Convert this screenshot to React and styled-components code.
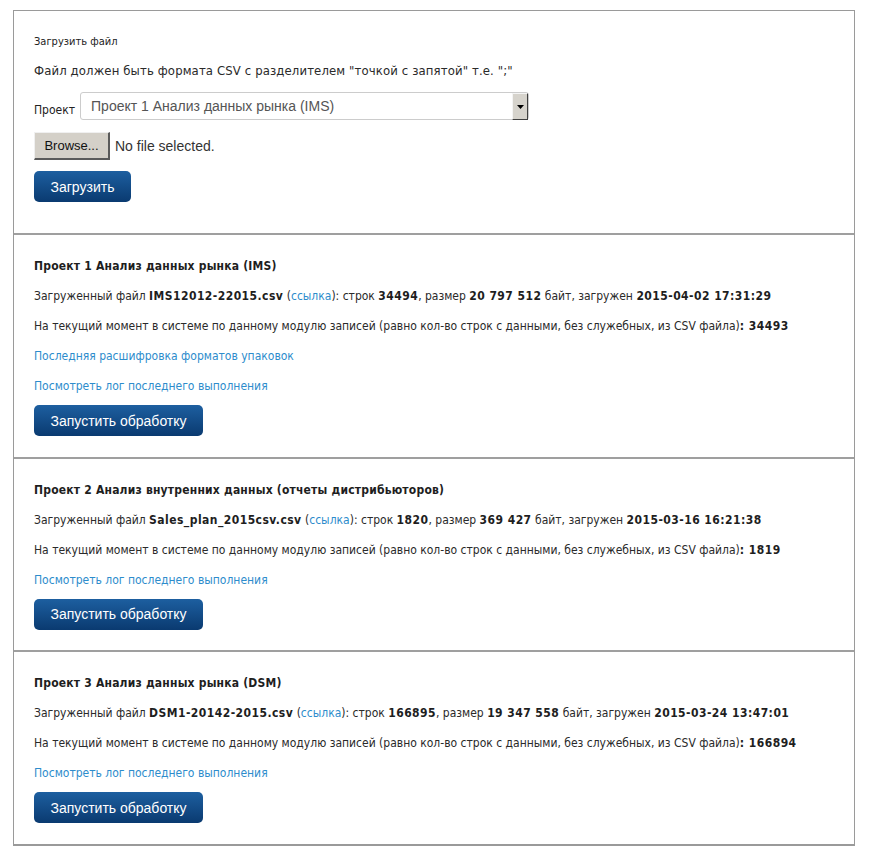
import React from "react";
import styled, { createGlobalStyle } from "styled-components";

const GlobalStyle = createGlobalStyle`
  body {
    margin: 0;
    background: #ffffff;
    font-family: "DejaVu Sans Condensed", "DejaVu Sans", Verdana, sans-serif;
    font-size: 12px;
    color: #222;
  }
`;

const projects = [
  {
    title: "Проект 1 Анализ данных рынка (IMS)",
    file: "IMS12012-22015.csv",
    rows: "34494",
    size: "20 797 512",
    date: "2015-04-02 17:31:29",
    records: "34493",
    formats: true,
  },
  {
    title: "Проект 2 Анализ внутренних данных (отчеты дистрибьюторов)",
    file: "Sales_plan_2015csv.csv",
    rows: "1820",
    size: "369 427",
    date: "2015-03-16 16:21:38",
    records: "1819",
    formats: false,
  },
  {
    title: "Проект 3 Анализ данных рынка (DSM)",
    file: "DSM1-20142-2015.csv",
    rows: "166895",
    size: "19 347 558",
    date: "2015-03-24 13:47:01",
    records: "166894",
    formats: false,
  },
];

export default function App() {
  return (
    <>
      <GlobalStyle />
      <Panel>
        <Section first>
          <Label>Загрузить файл</Label>
          <Hint>Файл должен быть формата CSV с разделителем "точкой с запятой" т.е. ";"</Hint>
          <FieldRow>
            <FieldLabel>Проект</FieldLabel>
            <SelectBox>
              <SelectText>Проект 1 Анализ данных рынка (IMS)</SelectText>
              <SelectArrow>
                <svg width="7" height="4" viewBox="0 0 7 4">
                  <path d="M0 0h7L3.5 4z" fill="#000" />
                </svg>
              </SelectArrow>
            </SelectBox>
          </FieldRow>
          <FileRow>
            <BrowseButton>Browse...</BrowseButton>
            <FileStatus>No file selected.</FileStatus>
          </FileRow>
          <PrimaryButton>Загрузить</PrimaryButton>
        </Section>
        {projects.map((p) => (
          <Section key={p.title}>
            <Title>{p.title}</Title>
            <Line>
              Загруженный файл <b>{p.file}</b> (<Link href="#">ссылка</Link>): строк{" "}
              <b>{p.rows}</b>, размер <b>{p.size}</b> байт, загружен <b>{p.date}</b>
            </Line>
            <Line>
              На текущий момент в системе по данному модулю записей (равно кол-во строк с
              данными, без служебных, из CSV файла)<b>: {p.records}</b>
            </Line>
            {p.formats && (
              <Line>
                <Link href="#">Последняя расшифровка форматов упаковок</Link>
              </Line>
            )}
            <Line>
              <Link href="#">Посмотреть лог последнего выполнения</Link>
            </Line>
            <PrimaryButton $pull>Запустить обработку</PrimaryButton>
          </Section>
        ))}
      </Panel>
    </>
  );
}

const Panel = styled.div`
  box-sizing: border-box;
  width: 842px;
  margin: 10px 0 0 13px;
  border: 1px solid #9a9a9a;
  border-bottom-width: 2px;
`;

const Section = styled.div`
  display: flex;
  flex-direction: column;
  align-items: flex-start;
  padding: ${({ first }) => (first ? "22px 20px 31px" : "22px 20px 20.6px")};
  border-top: ${({ first }) => (first ? "none" : "2px solid #9f9f9f")};
`;

const Label = styled.div`
  line-height: 18px;
  font-size: 11px;
  margin-bottom: 11px;
`;

const Hint = styled.div`
  line-height: 18px;
  font-size: 13px;
  letter-spacing: 0.12px;
  color: #2a2a2a;
  margin-bottom: 12px;
  white-space: nowrap;
`;

const Title = styled.div`
  line-height: 18px;
  font-weight: bold;
  letter-spacing: 0.2px;
  margin-bottom: 12px;
  color: #1e1e1e;
`;

const Line = styled.div`
  line-height: 18px;
  margin-bottom: 12px;
  color: #2a2a2a;
  white-space: nowrap;

  b {
    color: #1e1e1e;
    letter-spacing: 0.45px;
  }
`;

const Link = styled.a`
  color: #2d8ccc;
  text-decoration: none;
`;

const FieldRow = styled.div`
  display: flex;
  align-items: flex-end;
  gap: 5px;
  margin-bottom: 12px;
`;

const FieldLabel = styled.span`
  line-height: 18px;
  padding-bottom: 1px;
`;

const SelectBox = styled.div`
  position: relative;
  box-sizing: border-box;
  width: 449px;
  height: 28px;
  border: 1px solid #cccccc;
  border-radius: 3px;
  display: flex;
  align-items: center;
  padding-left: 10px;
`;

const SelectText = styled.span`
  font-family: "Liberation Sans", Arial, sans-serif;
  font-size: 14px;
  color: #555;
`;

const SelectArrow = styled.span`
  position: absolute;
  top: 0;
  right: 0;
  box-sizing: border-box;
  width: 16px;
  height: 27px;
  background: #d6d3cc;
  border-top: 1px solid #f4f4f4;
  border-left: 1px solid #f4f4f4;
  border-right: 1px solid #404040;
  border-bottom: 1px solid #404040;
  display: flex;
  align-items: center;
  justify-content: center;
`;

const FileRow = styled.div`
  display: flex;
  align-items: center;
  gap: 5px;
  margin-bottom: 11px;
`;

const BrowseButton = styled.button`
  box-sizing: border-box;
  width: 76px;
  height: 28px;
  padding: 0;
  background: #d4d0c8;
  border: none;
  border-right: 2px solid #5a5a5a;
  border-bottom: 2px solid #5a5a5a;
  border-top: 1px solid #f0f0f0;
  border-left: 1px solid #f0f0f0;
  font-family: "Liberation Sans", Arial, sans-serif;
  font-size: 13px;
  color: #111;
`;

const FileStatus = styled.span`
  font-family: "Liberation Sans", Arial, sans-serif;
  font-size: 14px;
  color: #333;
`;

const PrimaryButton = styled.button`
  height: 31px;
  margin-top: ${({ $pull }) => ($pull ? "-2px" : "0")};
  padding: 0 16.5px;
  border: none;
  border-radius: 5px;
  background: linear-gradient(#1d5fa0, #0a3a70);
  color: #fff;
  font-family: "Liberation Sans", Arial, sans-serif;
  font-size: 14px;
`;
